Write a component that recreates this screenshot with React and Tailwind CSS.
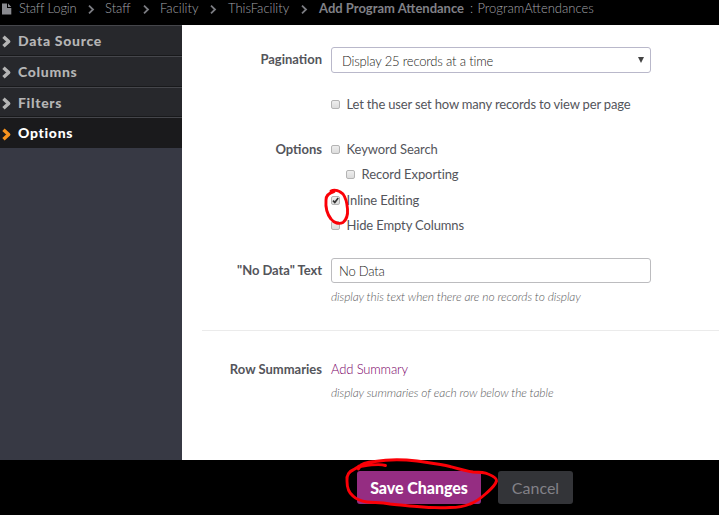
import React from "react";

function Chevron({ className }) {
  return (
    <svg viewBox="0 0 10 12" className={className} fill="none" stroke="currentColor">
      <path d="M2.2 1.6 L7 6 L2.2 10.4" strokeWidth="3.2" strokeLinejoin="round" />
    </svg>
  );
}

function Separator({ className }) {
  return (
    <svg viewBox="0 0 7 9" className={`mt-px h-[9px] w-[7px] shrink-0 ${className}`} fill="none" stroke="#7b7c82">
      <path d="M1 0.7 L5 4.5 L1 8.3" strokeWidth="1.8" />
    </svg>
  );
}

function Crumb({ width, className = "", children }) {
  return <span className={`block shrink-0 whitespace-nowrap ${width} ${className}`}>{children}</span>;
}

function Header() {
  return (
    <header className="flex h-[25px] items-center pb-[8px] pl-[2px] text-[13px] leading-[17px] font-light text-[#a2a3a9]">
      <svg viewBox="0 0 10 12" className="mt-px mr-[7px] h-[12px] w-[10px] shrink-0" fill="#8a8b90">
        <path d="M0 0.5 H5 V5 H9.3 V11.5 H0 Z M6 0.5 L9.3 4 H6 Z" />
      </svg>
      <Crumb width="w-[58px]" className="tracking-[-0.16px]">Staff Login</Crumb>
      <Separator className="ml-[11px] mr-[10px]" />
      <Crumb width="w-[26px]">Staff</Crumb>
      <Separator className="ml-[12px] mr-[10px]" />
      <Crumb width="w-[39px]">Facility</Crumb>
      <Separator className="ml-[11px] mr-[11px]" />
      <Crumb width="w-[62px]">ThisFacility</Crumb>
      <Separator className="ml-[11px] mr-[11px]" />
      <Crumb width="w-[151px]" className="font-bold text-[#808187]">Add Program Attendance</Crumb>
      <Crumb width="w-[7.5px]">:</Crumb>
      <Crumb width="w-[120px]">ProgramAttendances</Crumb>
    </header>
  );
}

function NavItem({ label, height, active }) {
  return (
    <li
      className={`flex items-center border-t border-[#45464b] pl-px ${height} ${
        active ? "bg-[#1a1a1c] text-white" : "border-b border-b-[#18191b] bg-[#27282c] text-[#b5b5b5]"
      }`}
    >
      <Chevron className={`mt-[2px] h-[13px] w-[11px] ${active ? "text-[#f7931e]" : "text-[#b5b5b5]"}`} />
      <span className="ml-[6px] text-[14px] leading-[18px] font-black tracking-[0.7px]">{label}</span>
    </li>
  );
}

function Checkbox({ checked }) {
  return (
    <span className="block h-[9px] w-[9px] shrink-0 rounded-[2px] border border-[#b4b4b4] bg-linear-to-b from-[#eeeeee] to-[#dcdcdc]">
      {checked && (
        <svg viewBox="0 0 7 7" className="block h-[7px] w-[7px]" fill="none" stroke="#333">
          <path d="M1 3.6 L2.8 5.4 L6.2 1" strokeWidth="1.7" />
        </svg>
      )}
    </span>
  );
}

function Row({ label, height, className = "", children }) {
  return (
    <div className={`flex items-center ${height} ${className}`}>
      <div className="mr-[9px] w-[140px] shrink-0 text-right text-[13px] leading-[18px] font-bold">{label}</div>
      {children}
    </div>
  );
}

function Option({ label, checked, tracking = "tracking-[-0.08px]" }) {
  return (
    <label className="flex items-center gap-[6.5px] text-[13px] leading-[18px] whitespace-nowrap">
      <Checkbox checked={checked} />
      <span className={tracking}>{label}</span>
    </label>
  );
}

function Hint({ children }) {
  return <span className="text-[12px] leading-[18px] font-light tracking-[-0.09px] text-[#5c5c60] italic">{children}</span>;
}

function Annotations() {
  return (
    <svg viewBox="0 0 719 515" className="pointer-events-none absolute inset-0 h-[515px] w-[719px]" fill="none" stroke="#fb0007" strokeWidth="2.9" strokeLinecap="round" strokeLinejoin="round">
      <path d="M331 191 C335 189 340 191 343 194 C346 198 347 203 347.5 209 C348 215 346 220 343 222.5 C339 224.5 334 223 331 219 C327 214 325.5 206 326 200 C326 196 329 193 334 191.5" />
      <path d="M385.5 465.5 C381 464 370 465 363 466 C360 466 359 467 358.5 469 M359 467 C361 464 368 462 375 461.5 C390 459 404 459.5 417 461 C431 463 441 464 450 466.5 C459 469 466 471 473 472 C479 472 484 472 488 474 C493 476 497 478 496.5 481 C495 486 490 490 486 493.5 C481 498 476 502 470 504 C463 507 457 507.5 450 507.5 C438 508 427 507.5 417 506.5 C406 506 398 504.5 390 504 C380 502 374 503 367 502 C360 501 356 499 353 496 C349 493 347 487 347 481 C346 475 350 471 353 470 C356 468 357 468 359 466" />
    </svg>
  );
}

export default function App() {
  return (
    <div className="relative flex h-[515px] w-[719px] flex-col overflow-hidden bg-black font-['Lato',sans-serif]">
      <Header />
      <div className="flex h-[435px]">
        <aside className="w-[182px] shrink-0 bg-[#373944]">
          <ul>
            <NavItem label="Data Source" height="h-[31px]" />
            <NavItem label="Columns" height="h-[31px]" />
            <NavItem label="Filters" height="h-[30px] [&>span]:mt-px" />
            <NavItem label="Options" height="h-[31px]" active />
          </ul>
        </aside>
        <main className="grow bg-white pt-[22px] text-[#54555b]">
          <Row label="Pagination" height="h-[26px]" className="[&>div:first-child]:-mt-[2px]">
            <div className="flex h-[26px] w-[320px] items-center justify-between rounded-[3px] border border-[#b9b8ca] pr-[6px] pl-[10px]">
              <span className="mt-px text-[13px] leading-[18px] font-light tracking-[-0.18px] text-[#1c1c20]">Display 25 records at a time</span>
              <svg viewBox="0 0 6 6" className="mb-px h-[6px] w-[6px]" fill="#444"><path d="M0 0 H6 L3 6 Z" /></svg>
            </div>
          </Row>
          <Row height="h-[25px]" className="mt-[19px]">
            <Option label="Let the user set how many records to view per page" tracking="-mt-px tracking-[-0.17px]" />
          </Row>
          <Row label="Options" height="h-[24px]" className="mt-[20px]">
            <Option label="Keyword Search" />
          </Row>
          <Row height="h-[26px]" className="pl-[15px]">
            <Option label="Record Exporting" />
          </Row>
          <Row height="h-[26px]">
            <Option label="Inline Editing" checked />
          </Row>
          <Row height="h-[24px]">
            <Option label="Hide Empty Columns" tracking="tracking-[-0.13px]" />
          </Row>
          <Row label={'"No Data" Text'} height="h-[25px]" className="mt-[21px] [&>div:first-child]:-mt-[2px] [&>div:first-child]:tracking-[-0.05px]">
            <div className="flex h-[25px] w-[320px] items-center rounded-[3px] border border-[#bcbcbf] pl-[7px] text-[13px] leading-[18px] font-light tracking-[-0.2px] text-[#1c1c20]">No Data</div>
          </Row>
          <Row height="h-[20px]" className="mt-[4px]">
            <Hint>display this text when there are no records to display</Hint>
          </Row>
          <div className="mt-[23px] ml-[20px] h-px bg-[#ebebeb]" />
          <Row label="Row Summaries" height="h-[24px]" className="mt-[26px]">
            <a className="text-[13px] leading-[18px] font-light tracking-[-0.15px] text-[#7a0068]">Add Summary</a>
          </Row>
          <Row height="h-[20px]" className="mt-[2px]">
            <Hint>display summaries of each row below the table</Hint>
          </Row>
        </main>
      </div>
      <footer className="flex gap-[17px] pt-[11px] pl-[357px]">
        <button className="h-[33px] w-[124px] rounded-[3px] bg-[#952d82] pt-px text-[16px] leading-[18px] font-black tracking-[-0.05px] whitespace-nowrap text-white">Save Changes</button>
        <button className="h-[33px] w-[75px] rounded-[3px] bg-[#333438] pt-px text-[16px] leading-[18px] text-[#828187]">Cancel</button>
      </footer>
      <Annotations />
    </div>
  );
}
